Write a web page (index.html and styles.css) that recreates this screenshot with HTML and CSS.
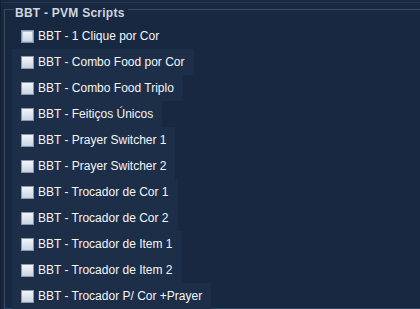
FILE: index.html
```html
<!DOCTYPE html>
<html>
<head>
<meta charset="utf-8">
<link rel="stylesheet" href="styles.css">
</head>
<body>
<div class="topline"></div>
<div class="group">
  <div class="group-head">
    <span class="seg-short"></span>
    <span class="title">BBT - PVM Scripts</span>
    <span class="seg-long"></span>
  </div>
  <ul class="list">
    <li class="row first"><span class="box focus"></span><span class="label">BBT - 1 Clique por Cor</span></li>
    <li class="row"><span class="box"></span><span class="label">BBT - Combo Food por Cor</span></li>
    <li class="row"><span class="box"></span><span class="label">BBT - Combo Food Triplo</span></li>
    <li class="row"><span class="box"></span><span class="label">BBT - Feitiços Únicos</span></li>
    <li class="row"><span class="box"></span><span class="label">BBT - Prayer Switcher 1</span></li>
    <li class="row"><span class="box"></span><span class="label">BBT - Prayer Switcher 2</span></li>
    <li class="row"><span class="box"></span><span class="label">BBT - Trocador de Cor 1</span></li>
    <li class="row"><span class="box"></span><span class="label">BBT - Trocador de Cor 2</span></li>
    <li class="row"><span class="box"></span><span class="label">BBT - Trocador de Item 1</span></li>
    <li class="row"><span class="box"></span><span class="label">BBT - Trocador de Item 2</span></li>
    <li class="row"><span class="box"></span><span class="label">BBT - Trocador P/ Cor +Prayer</span></li>
  </ul>
</div>
</body>
</html>
```
FILE: styles.css
```css
html, body {
  margin: 0;
  padding: 0;
  background: #172840;
  width: 420px;
  height: 309px;
  overflow: hidden;
  font-family: "Liberation Sans", Arial, sans-serif;
}
body {
  border-left: 1px solid #122033;
  box-sizing: border-box;
}
.topline {
  height: 1px;
  margin-top: 2px;
  background: #26374c;
}
.group {
  margin-top: 6px;
  margin-left: 3px;
  border-left: 1px solid #3a4b5f;
  border-bottom: 1px solid #2b4560;
  height: 299px;
}
.group-head {
  display: flex;
  align-items: flex-start;
  height: 14px;
}
.seg-short {
  width: 9px;
  border-top: 1px solid #3a4b5f;
}
.seg-long {
  flex: 1;
  border-top: 1px solid #3a4b5f;
}
.title {
  margin-top: -3px;
  padding: 0 3px 0 1px;
  font-size: 12px;
  font-weight: bold;
  line-height: 14px;
  color: #cfd6de;
  letter-spacing: 0.25px;
}
.list {
  list-style: none;
  margin: 0;
  padding: 0 0 0 7px;
}
.row {
  display: flex;
  align-items: center;
  width: fit-content;
  height: 26px;
  padding: 0 9px;
  background: #1d2e48;
}
.row.first {
  background: transparent;
}
.box {
  width: 11px;
  height: 11px;
  border: 1px solid #8a98aa;
  background: linear-gradient(#f2f5f9, #c9d5e3);
  flex: none;
}
.box.focus {
  border-color: #7c93ae;
  box-shadow: inset 0 0 0 1px #b4c4d6;
}
.label {
  margin-left: 4px;
  font-size: 12px;
  color: #f4f6f8;
  white-space: nowrap;
}
```
